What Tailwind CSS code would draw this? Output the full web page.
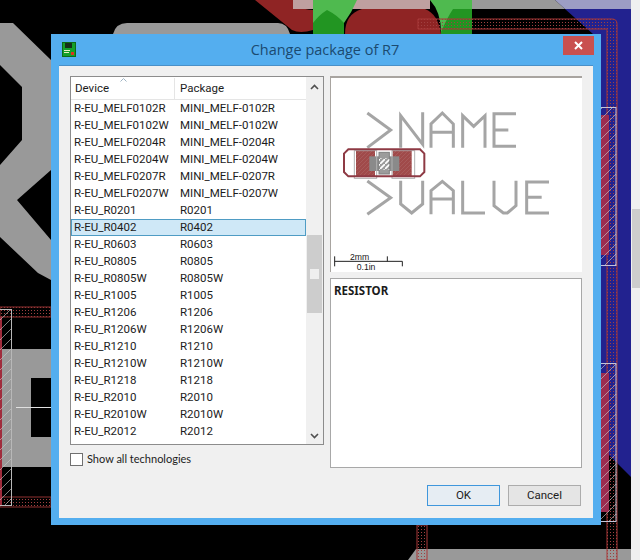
<!DOCTYPE html>
<html lang="en">
<head>
    <meta charset="UTF-8">
    <title>Change package of R7</title>
    <script src="https://cdn.jsdelivr.net/npm/@tailwindcss/browser@4"></script>
</head>
<body class="bg-black">
<div class="relative w-[640px] h-[560px] overflow-hidden bg-black font-['Roboto',sans-serif] text-[11.5px] text-[#1c1c1c]">

    <!-- board behind the dialog -->
    <svg class="absolute left-0 top-0" width="640" height="560" viewBox="0 0 640 560">
        <defs>
            <pattern id="dots" width="3" height="3" patternUnits="userSpaceOnUse">
                <rect x="1" y="1" width="1" height="1" fill="#a04040"/>
            </pattern>
            <pattern id="hatch" width="10" height="10" patternUnits="userSpaceOnUse">
                <path d="M-1 11L11 -1M-1 1L1 -1M9 11L11 9" stroke="#c8c8c8" stroke-width="0.8" stroke-opacity="0.8"/>
            </pattern>
        </defs>
        <!-- blue plane -->
        <polygon points="565,9 631,9 631,477 601,447 601,34 593,34" fill="#22228f"/>
        <polygon points="472,0 555,0 565,9 472,9" fill="#999999"/>
        <polygon points="555,0 631,0 631,9 565,9" fill="#9c9dc4"/>
        <!-- gray traces -->
        <path fill-rule="evenodd" d="M0 23H13L51 60V170L17 200L51 240V280L38 273L0 237V165L22 140V87L0 65Z" fill="#999999"/>
        <path d="M113 34Q116 23 127 23H278Q287 23 290 34Z" fill="#999999"/>
        <path fill-rule="evenodd" d="M0 349H51V378H31V437H51V467H0Z" fill="#999999"/>
        <polygon points="408,560 416,549 631,549 631,560" fill="#999999"/>
        <line x1="16" y1="407.5" x2="51" y2="407.5" stroke="#e0e0e0"/>
        <!-- red and green pads -->
        <path d="M255 0H293Q296 9 313 10V30Q300 34 292 30Z" fill="#8f2424"/>
        <path d="M345 34Q345 14 362 9H425Q438 14 441 34Z" fill="#8f2424"/>
        <rect x="293" y="0" width="137" height="9" fill="#bfa0a0"/>
        <rect x="313" y="0" width="31" height="34" fill="#229522"/>
        <rect x="441" y="0" width="31" height="34" fill="#229522"/>
        <path d="M313 0H357Q352 12 344 23Q337 15 327 10Q319 15 313 23Z" fill="#4fba4f"/>
        <path d="M430 0H472V9H453Q447 18 441 32Q441 12 430 0Z" fill="#4fba4f"/>
        <!-- pad hatching, left -->
        <rect x="0" y="307" width="51" height="10" fill="url(#dots)" stroke="#8f3030"/>
        <rect x="0" y="497" width="51" height="10" fill="url(#dots)" stroke="#8f3030"/>
        <rect x="0" y="317" width="2" height="188" fill="#a02c3c"/>
        <rect x="-1" y="309.5" width="12.5" height="196" fill="url(#hatch)" stroke="#b8b8b8"/>
        <!-- pad hatching, right -->
        <path d="M418 29V19H612Q617 19 617 24V560H607V29Z" fill="url(#dots)" stroke="#a83838"/>
        <rect x="417" y="525" width="10" height="35" fill="url(#dots)" stroke="#a83838"/>
        <rect x="601" y="115" width="8" height="140" fill="#9c2c50"/>
        <rect x="601" y="373" width="8" height="139" fill="#9c2c50"/>
        <rect x="600" y="107.5" width="16" height="158" fill="url(#hatch)" stroke="#c4c4d8"/>
        <rect x="600" y="363.5" width="16" height="158" fill="url(#hatch)" stroke="#c4c4d8"/>
    </svg>

    <!-- edge of the window behind -->
    <div class="absolute left-[631px] top-0 w-[9px] h-[560px] bg-[#f0f0f0]">
        <div class="absolute left-[1px] top-[209px] w-[8px] h-[79px] bg-[#cdcdcd]"></div>
    </div>

    <!-- dialog -->
    <div class="absolute left-[51px] top-[34px] w-[550px] h-[491px] bg-[#54aeef] flex flex-col">
        <div class="relative h-[31px] shrink-0 flex items-center justify-center">
            <svg class="absolute left-[11px] top-[8px]" width="14" height="15" viewBox="0 0 14 15">
                <rect width="14" height="15" fill="#0d6b16"/>
                <rect x="1" y="1" width="12" height="13" fill="#14a02a"/>
                <rect x="3" y="1" width="7" height="5" fill="#16301a"/>
                <rect x="2" y="8" width="6" height="1" fill="#e8f0c0"/>
                <rect x="2" y="10" width="5" height="1" fill="#e8f0c0"/>
                <rect x="9" y="10" width="3" height="3" fill="#e03020"/>
            </svg>
            <span class="text-[14.5px] text-[#1b4a70] font-['Open_Sans',sans-serif] mt-[1px] -ml-[2px]">Change package of R7</span>
            <div class="absolute left-[512px] top-[2px] w-[31px] h-[19px] bg-[#c9504f] flex items-center justify-center">
                <svg width="9" height="9" viewBox="0 0 9 9"><path d="M1 1L8 8M8 1L1 8" stroke="#ffffff" stroke-width="2"/></svg>
            </div>
        </div>

        <div class="flex-1 mx-2 mb-[7px] bg-[#f0f0f0] border-t border-[#4a90c8] px-[11px] pt-[10px] flex flex-col">
            <div class="flex gap-[6px] h-[392px]">
                <!-- left column -->
                <div class="w-[254px] flex flex-col">
                    <div class="h-[369px] shrink-0 border border-[#8c8c8c] bg-white flex overflow-hidden">
                        <div class="w-[235px]">
                            <div class="relative h-[23px] flex items-center border-b border-[#e5e5e5] pt-[1px]">
                                <span class="w-[104px] pl-[4px] border-r border-[#e5e5e5] h-full flex items-center">Device</span>
                                <span class="pl-[5px]">Package</span>
                                <svg class="absolute left-[49px] top-[1px]" width="7" height="4" viewBox="0 0 7 4"><path d="M0.5 3.5L3.5 0.5L6.5 3.5" fill="none" stroke="#9fb4c4"/></svg>
                            </div>
                            <div class="flex h-[17px] items-center"><span class="w-[109px] pl-[3px]">R-EU_MELF0102R</span><span>MINI_MELF-0102R</span></div>
                            <div class="flex h-[17px] items-center"><span class="w-[109px] pl-[3px]">R-EU_MELF0102W</span><span>MINI_MELF-0102W</span></div>
                            <div class="flex h-[17px] items-center"><span class="w-[109px] pl-[3px]">R-EU_MELF0204R</span><span>MINI_MELF-0204R</span></div>
                            <div class="flex h-[17px] items-center"><span class="w-[109px] pl-[3px]">R-EU_MELF0204W</span><span>MINI_MELF-0204W</span></div>
                            <div class="flex h-[17px] items-center"><span class="w-[109px] pl-[3px]">R-EU_MELF0207R</span><span>MINI_MELF-0207R</span></div>
                            <div class="flex h-[17px] items-center"><span class="w-[109px] pl-[3px]">R-EU_MELF0207W</span><span>MINI_MELF-0207W</span></div>
                            <div class="flex h-[17px] items-center"><span class="w-[109px] pl-[3px]">R-EU_R0201</span><span>R0201</span></div>
                            <div class="flex h-[17px] items-center bg-[#cfe8f7] outline outline-1 -outline-offset-1 outline-[#4f9cc4]"><span class="w-[109px] pl-[3px]">R-EU_R0402</span><span>R0402</span></div>
                            <div class="flex h-[17px] items-center"><span class="w-[109px] pl-[3px]">R-EU_R0603</span><span>R0603</span></div>
                            <div class="flex h-[17px] items-center"><span class="w-[109px] pl-[3px]">R-EU_R0805</span><span>R0805</span></div>
                            <div class="flex h-[17px] items-center"><span class="w-[109px] pl-[3px]">R-EU_R0805W</span><span>R0805W</span></div>
                            <div class="flex h-[17px] items-center"><span class="w-[109px] pl-[3px]">R-EU_R1005</span><span>R1005</span></div>
                            <div class="flex h-[17px] items-center"><span class="w-[109px] pl-[3px]">R-EU_R1206</span><span>R1206</span></div>
                            <div class="flex h-[17px] items-center"><span class="w-[109px] pl-[3px]">R-EU_R1206W</span><span>R1206W</span></div>
                            <div class="flex h-[17px] items-center"><span class="w-[109px] pl-[3px]">R-EU_R1210</span><span>R1210</span></div>
                            <div class="flex h-[17px] items-center"><span class="w-[109px] pl-[3px]">R-EU_R1210W</span><span>R1210W</span></div>
                            <div class="flex h-[17px] items-center"><span class="w-[109px] pl-[3px]">R-EU_R1218</span><span>R1218</span></div>
                            <div class="flex h-[17px] items-center"><span class="w-[109px] pl-[3px]">R-EU_R2010</span><span>R2010</span></div>
                            <div class="flex h-[17px] items-center"><span class="w-[109px] pl-[3px]">R-EU_R2010W</span><span>R2010W</span></div>
                            <div class="flex h-[17px] items-center"><span class="w-[109px] pl-[3px]">R-EU_R2012</span><span>R2012</span></div>
                        </div>
                        <!-- scrollbar -->
                        <div class="w-[17px] bg-[#f0f0f0] flex flex-col items-center">
                            <svg class="mt-[7px]" width="9" height="6" viewBox="0 0 9 6"><path d="M1 5L4.5 1.5L8 5" fill="none" stroke="#505050" stroke-width="1.6"/></svg>
                            <div class="mt-[145px] w-[15px] h-[78px] bg-[#cdcdcd] flex items-center justify-center">
                                <div class="w-[9px] h-[10px] bg-[#efefef]"></div>
                            </div>
                            <svg class="mt-[120px]" width="9" height="6" viewBox="0 0 9 6"><path d="M1 1L4.5 4.5L8 1" fill="none" stroke="#505050" stroke-width="1.6"/></svg>
                        </div>
                    </div>
                    <div class="mt-[8px] flex items-center gap-[4px] h-[13px]">
                        <div class="w-[13px] h-[13px] border border-[#707070] bg-white"></div>
                        <span class="font-['Lato',sans-serif] text-[11px]">Show all technologies</span>
                    </div>
                </div>

                <!-- right column -->
                <div class="w-[252px] flex flex-col gap-[6px]">
                    <div class="h-[196px] bg-white border-t-2 border-l border-[#a8a4a0] overflow-hidden">
                        <svg width="252" height="196" viewBox="0 21 756 588" class="-ml-px -mt-[2px]">
                            <defs>
                                <pattern id="padhatch" width="12" height="12" patternUnits="userSpaceOnUse">
                                    <path d="M-2 14L14 -2M-2 2L2 -2M10 14L14 10" stroke="#b06c6c" stroke-width="1.4"/>
                                </pattern>
                                <pattern id="midhatch" width="15" height="15" patternUnits="userSpaceOnUse">
                                    <path d="M-2 17L17 -2" stroke="#ffffff" stroke-width="5"/>
                                </pattern>
                            </defs>
                            <g fill="none" stroke="#a5a5a5" stroke-width="9" stroke-linejoin="miter">
                                <path d="M112 132L182 183L112 236"/>
                                <path d="M212 236V140L278 226V130"/>
                                <path d="M303 236V165L337 132L370 165V236M303 190H370"/>
                                <path d="M398 236V140L431 172L465 140V236"/>
                                <path d="M558 134H492V232H558M492 183H535"/>
                                <path d="M112 336L182 386L112 436"/>
                                <path d="M212 335V405L245 432L278 405V335"/>
                                <path d="M303 436V365L337 337L370 365V436M303 390H370"/>
                                <path d="M398 335V432H465"/>
                                <path d="M492 335V410L520 432H532L558 410V335"/>
                                <path d="M657 339H590V432H657M590 385H635"/>
                            </g>
                            <rect x="78" y="240" width="57" height="82" fill="#a04a4a"/>
                            <rect x="188" y="240" width="57" height="82" fill="#a04a4a"/>
                            <rect x="78" y="240" width="57" height="82" fill="url(#padhatch)"/>
                            <rect x="188" y="240" width="57" height="82" fill="url(#padhatch)"/>
                            <rect x="118" y="262" width="90" height="44" fill="#8a8a8a"/>
                            <rect x="147" y="250" width="31" height="65" fill="#9c9c9c" stroke="#808080" stroke-width="3"/>
                            <rect x="147" y="268" width="31" height="34" fill="url(#midhatch)"/>
                            <rect x="73" y="245" width="67" height="83" fill="none" stroke="#b0b0b0" stroke-width="3"/>
                            <rect x="186" y="245" width="68" height="83" fill="none" stroke="#b0b0b0" stroke-width="3"/>
                            <path d="M55 241H270L283 254V309L270 322H55L42 309V254Z" fill="none" stroke="#8e3a44" stroke-width="6"/>
                            <path d="M14 562V592M14 577H217M172 562V577M217 577V592" fill="none" stroke="#202020" stroke-width="3"/>
                            <text x="60" y="572" font-size="26" font-family="Liberation Sans" fill="#202020">2mm</text>
                            <text x="80" y="602" font-size="26" font-family="Liberation Sans" fill="#202020">0.1in</text>
                        </svg>
                    </div>
                    <div class="h-[190px] bg-white border border-[#a8a8a8] px-[3px] pt-[3px] font-bold font-['Noto_Sans',sans-serif] text-[11.5px]">RESISTOR</div>
                </div>
            </div>

            <div class="mt-[17px] flex justify-end gap-[8px] pr-px">
                <button class="w-[73px] h-[21px] bg-[#e6edf3] border border-[#3f97dc] flex items-center justify-center">OK</button>
                <button class="w-[73px] h-[21px] bg-[#e5e5e5] border border-[#acacac] flex items-center justify-center">Cancel</button>
            </div>
        </div>
    </div>
</div>
</body>
</html>
